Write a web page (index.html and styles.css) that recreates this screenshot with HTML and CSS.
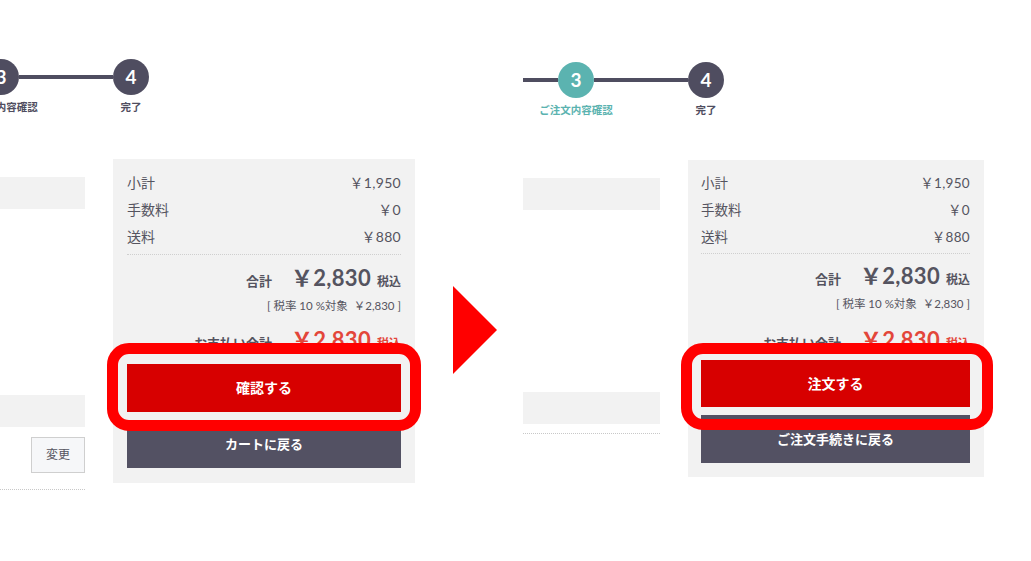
FILE: index.html
```html
<!DOCTYPE html>
<html lang="ja">
<head>
<meta charset="utf-8">
<link rel="stylesheet" href="styles.css">
</head>
<body>
<div class="stage">
  <section class="shot shot--a">
    <div class="stepper">
      <div class="step-lead"></div>
      <div class="step step--done">
        <div class="step-num">3</div>
        <div class="step-label">ご注文内容確認</div>
      </div>
      <div class="step-line"></div>
      <div class="step">
        <div class="step-num">4</div>
        <div class="step-label">完了</div>
      </div>
    </div>
    <div class="cols">
      <div class="main">
        <div class="bar"></div>
        <div class="spacer"></div>
        <div class="bar"></div>
        <div class="actions"><span class="btn-change">変更</span></div>
        <div class="dots"></div>
      </div>
      <aside class="summary">
        <div class="row"><span>小計</span><span class="val">￥1,950</span></div>
        <div class="row"><span>手数料</span><span class="val">￥0</span></div>
        <div class="row"><span>送料</span><span class="val">￥880</span></div>
        <div class="total"><span class="total-label">合計</span><span class="total-num">￥2,830</span><span class="total-tax">税込</span></div>
        <div class="tax-note">[ 税率 10 %対象 &nbsp;￥2,830 ]</div>
        <div class="total total--pay"><span class="total-label">お支払い合計</span><span class="total-num">￥2,830</span><span class="total-tax">税込</span></div>
        <div class="btn btn--red">確認する</div>
        <div class="btn btn--dark">カートに戻る</div>
        <div class="ring"></div>
      </aside>
    </div>
  </section>

  <div class="arrow">
    <svg width="44" height="88" viewBox="0 0 44 88"><polygon points="0,0 0,88 44,44" fill="#ff0000"/></svg>
  </div>

  <section class="shot shot--b">
    <div class="stepper">
      <div class="step-lead"></div>
      <div class="step step--active">
        <div class="step-num">3</div>
        <div class="step-label">ご注文内容確認</div>
      </div>
      <div class="step-line"></div>
      <div class="step">
        <div class="step-num">4</div>
        <div class="step-label">完了</div>
      </div>
    </div>
    <div class="cols">
      <div class="main">
        <div class="bar"></div>
        <div class="spacer"></div>
        <div class="bar"></div>
        <div class="dots"></div>
      </div>
      <aside class="summary">
        <div class="row"><span>小計</span><span class="val">￥1,950</span></div>
        <div class="row"><span>手数料</span><span class="val">￥0</span></div>
        <div class="row"><span>送料</span><span class="val">￥880</span></div>
        <div class="total"><span class="total-label">合計</span><span class="total-num">￥2,830</span><span class="total-tax">税込</span></div>
        <div class="tax-note">[ 税率 10 %対象 &nbsp;￥2,830 ]</div>
        <div class="total total--pay"><span class="total-label">お支払い合計</span><span class="total-num">￥2,830</span><span class="total-tax">税込</span></div>
        <div class="btn btn--red">注文する</div>
        <div class="btn btn--dark">ご注文手続きに戻る</div>
        <div class="ring"></div>
      </aside>
    </div>
  </section>
</div>
</body>
</html>
```

FILE: styles.css
```css
* { box-sizing: border-box; }
html, body {
  margin: 0;
  padding: 0;
  background: #fff;
  width: 1031px;
  height: 561px;
  overflow: hidden;
  font-family: "Lato", "Noto Sans CJK JP", sans-serif;
  color: #555460;
}
.stage {
  display: flex;
  align-items: flex-start;
  width: 1031px;
  height: 561px;
}
.shot {
  flex: none;
  display: flex;
  flex-direction: column;
}
.shot--a {
  width: 467px;
  margin-left: -52px;
  padding-top: 59px;
}
.shot--b {
  width: 461px;
  margin-left: 26px;
  padding-top: 62px;
}
.arrow {
  flex: none;
  margin-left: 38px;
  margin-top: 286px;
  width: 44px;
  height: 88px;
}
.arrow svg { display: block; }

/* stepper */
.stepper {
  display: flex;
  align-items: flex-start;
  height: 55px;
}
.step-lead, .step-line {
  height: 4px;
  margin-top: 16px;
  background: #4f4d60;
}
.step-lead { width: 35px; }
.step-line { width: 94px; }
.step {
  width: 36px;
  display: flex;
  flex-direction: column;
  align-items: center;
}
.step-num {
  width: 36px;
  height: 36px;
  border-radius: 50%;
  background: #4f4d60;
  color: #fff;
  font-family: "Lato", sans-serif;
  font-weight: 700;
  font-size: 19px;
  line-height: 36px;
  text-align: center;
}
.step-label {
  margin-top: 5px;
  white-space: nowrap;
  font-size: 10.5px;
  line-height: 14px;
  font-weight: 700;
  color: #4f4d60;
}
.step--active .step-num { background: #5bb3b0; }
.step--active .step-label { color: #5bb3b0; }

/* columns */
.cols {
  display: flex;
  align-items: flex-start;
  gap: 28px;
}
.shot--a .cols { margin-top: 45px; }
.shot--b .cols { margin-top: 43px; }
.main {
  width: 137px;
  flex: none;
  padding-top: 18px;
}
.bar {
  height: 32px;
  background: #f2f2f2;
}
.spacer { height: 186px; }
.shot--b .spacer { height: 182px; }
.actions {
  display: flex;
  justify-content: flex-end;
  margin-top: 10px;
}
.btn-change {
  width: 54px;
  height: 36px;
  border: 1px solid #cfcfcf;
  background: #f6f7f9;
  font-size: 12px;
  line-height: 34px;
  text-align: center;
  color: #555460;
}
.dots {
  margin-top: 16px;
  border-top: 1px dotted #c8c8c8;
}
.shot--b .dots { margin-top: 9px; }

/* summary */
.summary {
  position: relative;
  flex: none;
  width: 302px;
  background: #f2f2f2;
  padding: 10px 14px 15px;
}
.shot--b .summary { width: 296px; padding: 10px 14px 14px 13px; }
.row {
  display: flex;
  justify-content: space-between;
  height: 27px;
  line-height: 27px;
  font-size: 14px;
}
.shot--b .row { font-size: 13.5px; }
.row:nth-child(3) {
  border-bottom: 1px dotted #cfcfcf;
  height: 32px;
}
.shot--b .row:nth-child(3) { height: 30px; }
.val { letter-spacing: 0.3px; }
.total {
  display: flex;
  justify-content: flex-end;
  align-items: baseline;
  margin-top: 7px;
  height: 32px;
  line-height: 32px;
}
.shot--b .total { margin-top: 6px; }
.total-label {
  font-size: 13px;
  font-weight: 700;
  margin-right: 19px;
}
.total-num {
  font-size: 22px;
  font-weight: 700;
  letter-spacing: 0.3px;
}
.total-tax {
  font-size: 12px;
  font-weight: 700;
  margin-left: 6px;
}
.tax-note {
  margin-top: 4px;
  text-align: right;
  font-size: 11.5px;
  line-height: 16px;
}
.total--pay { margin-top: 10px; }
.shot--b .total--pay { margin-top: 12px; }
.total--pay .total-num, .total--pay .total-tax { color: #e3463a; }
.btn {
  height: 48px;
  line-height: 48px;
  text-align: center;
  color: #fff;
  font-size: 14px;
  font-weight: 700;
}
.btn--red {
  margin-top: 8px;
  background: #d70000;
}
.shot--b .btn--red { margin-top: 4px; height: 47px; line-height: 47px; }
.btn--dark {
  margin-top: 8px;
  background: #535163;
  font-size: 13px;
}
.ring {
  position: absolute;
  left: -6px;
  top: 184px;
  width: 314px;
  height: 88px;
  border: 11px solid #ff0000;
  border-radius: 22px;
}
.shot--b .ring {
  left: -7px;
  top: 183px;
  width: 312px;
  height: 87px;
}
```
